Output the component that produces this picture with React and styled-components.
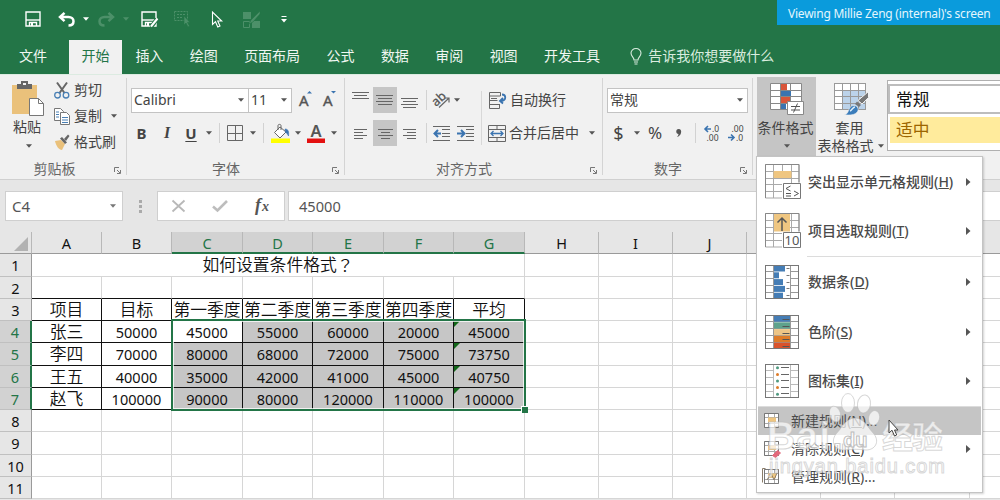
import React from "react";
import styled, { createGlobalStyle, css } from "styled-components";

const GlobalStyle = createGlobalStyle`
  * { box-sizing: border-box; }
  body {
    margin: 0;
    overflow: hidden;
    font-family: "Noto Sans", "Noto Sans CJK SC", sans-serif;
    font-size: 14px;
    color: #444;
  }
  svg { display: block; flex: none; overflow: visible; }
`;

const Window = styled.div`
  position: relative;
  width: 1000px;
  height: 500px;
  overflow: hidden;
  display: flex;
  flex-direction: column;
  background: #e6e6e6;
  line-height: 20px;
  white-space: nowrap;
`;

/* title bar + tabs */
const QuickAccess = styled.div`
  height: 40px;
  padding: 0 0 2px 14px;
  display: flex;
  align-items: center;
  background: #237547;
`;
const Slot = styled.div`
  width: ${(p) => p.$w}px;
  flex: none;
  display: flex;
  justify-content: center;
  align-items: center;
`;
const Banner = styled.div`
  position: absolute;
  top: 0;
  right: 0;
  width: 223px;
  height: 25px;
  padding-left: 11px;
  background: #0a9bdc;
  color: #e4f6fd;
  font-size: 12px;
  line-height: 27px;
  letter-spacing: -0.23px;
`;
const Tabs = styled.div`
  height: 34px;
  display: flex;
  background: #237547;
  color: #f0f7f2;
  line-height: 32px;
`;
const Tab = styled.div`
  padding: 0 13.2px;
  ${(p) => p.$first && css`width: 69px; padding: 0 0 0 19px;`}
  ${(p) => p.$active && css`padding: 0 12.6px; background: #f1f1f1; color: #237547;`}
`;
const TellMe = styled.div`
  display: flex;
  align-items: center;
  gap: 6px;
  margin-left: 17px;
  padding-bottom: 2px;
  color: #d9ecdf;
`;

/* ribbon */
const Ribbon = styled.div`
  height: 106px;
  flex: none;
  display: flex;
  background: #f1f1f1;
  border-top: 1px solid #dcebe1;
  border-bottom: 1px solid #d0d0d0;
`;
const Group = styled.div`
  width: ${(p) => p.$w}px;
  flex: none;
  display: flex;
  flex-direction: column;
  position: relative;
  background: linear-gradient(#d4d4d4, #d4d4d4) right 3px / 1px 97px no-repeat;
`;
const GroupBody = styled.div`
  height: 84px;
  display: flex;
  flex-direction: ${(p) => (p.$column ? "column" : "row")};
`;
const GroupLabel = styled.div`
  height: 20px;
  display: flex;
  align-items: center;
  justify-content: center;
  color: #666;
  padding-right: ${(p) => p.$shift || 20}px;
`;
const Launcher = styled.div`
  position: absolute;
  right: 6px;
  bottom: 5px;
`;
const PasteButton = styled.div`
  width: 54px;
  padding-top: 6px;
  display: flex;
  flex-direction: column;
  align-items: center;
  svg:first-child { margin-left: 3px; }
  svg:last-child { margin: 7px 0 0 3px; }
`;
const ClipList = styled.div`
  padding-top: 2px;
`;
const ClipItem = styled.div`
  height: 26px;
  display: flex;
  align-items: center;
  gap: 4px;
  svg:last-child:not(:first-child) { margin-left: 5px; }
`;
const TopRow = styled.div`
  height: 26px;
  margin-top: 12px;
  display: flex;
  align-items: center;
  padding-left: ${(p) => p.$pad || 0}px;
`;
const BottomRow = styled(TopRow)`
  margin-top: 7px;
`;
const Combo = styled.div`
  width: ${(p) => p.$w}px;
  height: 25px;
  display: flex;
  align-items: center;
  justify-content: space-between;
  padding: 0 4px 0 2px;
  margin-right: -1px;
  background: #fff;
  border: 1px solid #c3c3c3;
`;
const ToolButton = styled(Slot)`
  height: 26px;
  ${(p) => p.$on && css`background: #c6c6c6;`}
`;
const Letter = styled.span`
  font-size: ${(p) => p.$size || 15}px;
  font-weight: ${(p) => (p.$plain ? 400 : 700)};
  font-style: ${(p) => (p.$italic ? "italic" : "normal")};
  font-family: ${(p) => (p.$italic ? '"Liberation Serif", serif' : "inherit")};
  text-decoration: ${(p) => (p.$under ? "underline" : "none")};
  text-underline-offset: 2px;
`;
const Divider = styled(Slot)`
  height: 20px;
  &::before { content: ""; width: 1px; height: 100%; background: #d2d2d2; }
`;
const Cluster = styled.div`
  width: ${(p) => p.$w}px;
  ${(p) => p.$line && css`background: linear-gradient(#d8d8d8, #d8d8d8) right 16px / 1px 54px no-repeat;`}
`;
const LabelText = styled.span`
  margin: 0 10px 0 3px;
`;
const BigButton = styled.div`
  width: ${(p) => p.$w}px;
  height: ${(p) => (p.$on ? 80 : 79)}px;
  margin-top: 2px;
  padding-top: 6px;
  display: flex;
  flex-direction: column;
  align-items: center;
  line-height: 18px;
  ${(p) => p.$on && css`background: #c5c5c5;`}
`;
const BigCaption = styled.div`
  margin: 3px 2px 0 0;
`;
const CaretLine = styled.div`
  display: flex;
  align-items: center;
  gap: 4px;
  height: 18px;
`;
const Gallery = styled.div`
  flex: 1;
  height: 71px;
  margin: 5px 0 0 2px;
  padding-top: 2px;
  background: #fff;
  border: 1px solid #b0b0b0;
  border-right: 0;
`;
const StyleCell = styled.div`
  height: 30px;
  border: 2px solid #bdbdbd;
  border-right: 0;
  padding-left: 6px;
  font-size: 16.8px;
  line-height: 27px;
  color: #111;
  margin-top: 1px;
  ${(p) => p.$neutral && css`
    height: 26px;
    border: 0;
    margin: 3px 0 0 2px;
    line-height: 25px;
    background: #ffeb9c;
    color: #9c6500;
  `}
`;

/* formula bar */
const FormulaBar = styled.div`
  height: 52px;
  flex: none;
  display: flex;
  padding: 11px 0 11px 5px;
`;
const Field = styled.div`
  width: ${(p) => p.$w}px;
  display: flex;
  align-items: center;
  padding: 0 6px;
  background: #fff;
  border: 1px solid #cfcfcf;
  font-size: 15px;
  line-height: 18px;
  padding-bottom: 1px;
  color: #555;
  ${(p) => p.$spread && css`justify-content: space-between;`}
  ${(p) => p.$value && css`
    flex: 1;
    margin-left: 3px;
    padding-left: 10px;
    border-right: 0;
    font-size: 14.6px;
  `}
`;
const FormulaButtons = styled(Field)`
  padding: 0 14px;
  justify-content: space-between;
`;

/* sheet */
const Sheet = styled.div`
  display: grid;
  grid-template-columns: 32px 70px 70px 71px 70px 71px 70px 71px 74px 74px 74px 74px 74px 75px 75px;
  grid-template-rows: 22px 23px 22px 22px 22px 23px 22px 22px 22px 23px 22px 22px;
  font-size: 14.5px;
  line-height: 20px;
  color: #111;
`;
const HeadCell = styled.div`
  display: flex;
  align-items: center;
  justify-content: center;
  background: ${(p) => (p.$on ? "#d2d2d2" : "#e6e6e6")};
  color: ${(p) => (p.$on ? "#237547" : "#111")};
  border-right: 1px solid #b8b8b8;
  border-bottom: ${(p) => (p.$on ? "2px solid #237547" : "1px solid #9a9a9a")};
  padding-top: ${(p) => (p.$on ? 1 : 0)}px;
`;
const RowHead = styled(HeadCell)`
  border-right: ${(p) => (p.$on ? "2px solid #237547" : "1px solid #9a9a9a")};
  border-bottom: 1px solid #c0c0c0;
  padding-top: 0;
`;
const Corner = styled(HeadCell)`
  align-items: flex-end;
  justify-content: flex-end;
  padding: 0 3px 2px 0;
`;
const Cell = styled.div`
  grid-column: ${(p) => p.$c} / span ${(p) => p.$span || 1};
  grid-row: ${(p) => p.$r};
  display: flex;
  align-items: center;
  justify-content: center;
  min-width: 0;
  font-size: ${(p) => (p.$cjk ? 16.8 : 14.5)}px;
  font-weight: ${(p) => (p.$cjk ? 350 : 400)};
  background: ${(p) => (p.$picked ? "#c6c6c6" : "#fff")};
  border-right: 1px solid ${(p) => (p.$boxed ? "#111" : "#d6d6d6")};
  border-bottom: 1px solid ${(p) => (p.$boxed || p.$ruled ? "#111" : "#d6d6d6")};
  ${(p) => p.$flag && css`
    background: linear-gradient(135deg, #13681a 4px, transparent 4.5px), #c6c6c6;
  `}
`;
const WideMark = styled.span`
  font-family: "Noto Sans CJK TC", sans-serif;
`;
const Selection = styled.div`
  grid-column: 4 / 9;
  grid-row: 5 / 9;
  margin: -2px -1px -1px -1px;
  border: 2px solid #237547;
  box-shadow: inset 0 0 0 1px rgba(255, 255, 255, 0.75);
  z-index: 1;
  display: flex;
  align-items: flex-end;
  justify-content: flex-end;
  &::after {
    content: "";
    width: 6px;
    height: 6px;
    margin: 0 -4px -4px 0;
    background: #237547;
    border: solid #fff;
    border-width: 1px 0 0 1px;
  }
`;

/* drop-down menu */
const Menu = styled.div`
  position: absolute;
  left: 756px;
  top: 156px;
  width: 227px;
  height: 337px;
  background: #fff;
  border: 1px solid #c4c4c4;
  padding: 0 1px;
  box-shadow: 1px 1px 2px rgba(0, 0, 0, 0.18);
  z-index: 2;
`;
const MenuItem = styled.div`
  height: 49.6px;
  display: flex;
  align-items: center;
  padding: 0 10px 0 7px;
  gap: 9px;
  font-weight: 500;
  color: #4a4a4a;
  > span { flex: 1; }
`;
const SmallItem = styled(MenuItem)`
  height: 28px;
  padding-left: 4px;
  gap: 11px;
  font-weight: 400;
  background: ${(p) => (p.$on ? "#c5c5c5" : "transparent")};
`;
const MenuRule = styled.div`
  height: 1px;
  margin: 0 0 0 ${(p) => p.$inset || 0}px;
  background: #dcdcdc;
`;

const Watermark = styled.div`
  position: absolute;
  left: 766px;
  top: 390px;
  z-index: 3;
`;
const Pointer = styled.div`
  position: absolute;
  left: 888px;
  top: 419px;
  z-index: 4;
`;

const Caret = ({ color = "#555" }) => (
  <svg width="6" height="4" viewBox="0 0 6 4"><path d="M0 .3h6L3 3.7z" fill={color} /></svg>
);
const Lines = ({ rows, w = 18, h = 16 }) => (
  <svg width={w} height={h} stroke="#666" strokeWidth="1">
    {rows.map(([x1, x2, y], i) => <path key={i} d={`M${x1} ${y + 0.5}H${x2}`} />)}
  </svg>
);
const LaunchIcon = () => (
  <svg width="7" height="7" fill="none" stroke="#777">
    <path d="M.5 5V.5H5M3 3l3 3M6.5 3v3.5H3" />
  </svg>
);

const SaveIcon = ({ edit }) => (
  <svg width="16" height="16" fill="none" stroke="#fff" strokeWidth="1.4">
    <path d="M1 1h14v14H1z" />
    <path d="M1 9h14" />
    <path d="M4.5 15v-3.5h7V15" />
    <path d="M6 12h2v3H6z" fill="#fff" stroke="none" />
    {edit && <path d="M16 8l-6 8" stroke="#237547" strokeWidth="4" />}
    {edit && <path d="M16.5 7.5L10 15.5" strokeWidth="2" />}
  </svg>
);
const UndoIcon = ({ dim }) => (
  <svg width="17" height="15" viewBox="0 0 17 15" fill="none" stroke={dim ? "#4c9069" : "#fff"} strokeWidth="2.5">
    <g transform={dim ? "translate(17 0) scale(-1 1)" : undefined}>
      <path d="M6.5 .8L2 5l4.500 4.200M2 5h8.500c3 0 5 1.800 5 4.200 0 2.800-2 4.300-5 4.300" />
    </g>
  </svg>
);

const Grid = ({ size = 34, cols, rows, children, color = "#999" }) => (
  <svg width={size} height={size}>
    <rect x=".5" y=".5" width={size - 1} height={size - 1} fill="#fff" />
    <g stroke={color}>
      {cols.map((x) => <path key={"c" + x} d={`M${x + 0.5} 0V${size}`} />)}
      {rows.map((y) => <path key={"r" + y} d={`M0 ${y + 0.5}H${size}`} />)}
    </g>
    {children}
    <rect x=".5" y=".5" width={size - 1} height={size - 1} fill="none" stroke="#777" />
  </svg>
);

const FIVE_ROWS = [6, 13, 20, 27];
const bars = [11, 5, 9, 11, 9];
const scale = ["#457db5", "#5ea28c", "#edc586", "#de7c28", "#d9532c"];

const HighlightIcon = () => (
  <svg width="34" height="36" fill="none" stroke="#aaa">
    <path d="M.5 34V.5H34V19M.5 34H17M0 7.500H34M0 14.500H34M0 20.500H17M0 27.500H17M8.500 0V34M17.500 0V7M26.500 0V19" />
    <path d="M9 7.500h17v6H9z" fill="#efc681" stroke="#efc681" />
    <path d="M.5 34V.5H34V18" stroke="#888" />
    <path d="M18.500 19.500h17v15h-17z" fill="#fff" stroke="#777" />
    <path d="M25.500 22l-4.500 2.500 4.500 2.500M21 29.500h5M21 32h5M29 27l4.500 2.500L29 32" stroke="#555" />
  </svg>
);
const TopIcon = () => (
  <svg width="34" height="36" fill="none" stroke="#aaa">
    <path d="M.5 34V.5H34V19M.5 34H17M0 7.500H34M0 14.500H34M0 20.500H17M0 27.500H17M8.500 0V34M26.500 0V19" />
    <path d="M9 .5h16v18H9z" fill="#efc681" stroke="none" />
    <path d="M.5 34V.5H34V18" stroke="#888" />
    <path d="M17 18V5M12.500 9.500L17 5l4.500 4.500" stroke="#555" strokeWidth="1.500" />
    <path d="M18.500 19.500h17v15h-17z" fill="#fff" stroke="#777" />
    <text x="19.500" y="32" fontSize="13" fontWeight="400" fill="#555" stroke="none">10</text>
  </svg>
);
const BarsIcon = () => (
  <Grid cols={[8, 25]} rows={FIVE_ROWS}>
    <path d="M9 1h16v32H9z" fill="#fff" />
    {bars.map((w, i) => <path key={i} d={`M9 ${i * 6.8 + 0.5}h${w}v6H9z`} fill="#457db5" />)}
    {bars.map((w, i) => <path key={"d" + i} d={`M21.500 ${Math.round(i * 6.8) + 3.5}h3`} stroke="#777" />)}
  </Grid>
);
const ScaleIcon = () => (
  <Grid cols={[8, 25]} rows={FIVE_ROWS}>
    {scale.map((c, i) => <path key={c} d={`M9 ${i * 6.8 + 0.5}h16v6.200H9z`} fill={c} />)}
    {scale.map((c, i) => <path key={"d" + c} d={`M17.500 ${Math.round(i * 6.8) + 4.5}h7`} stroke="#555" />)}
  </Grid>
);
const SetsIcon = () => (
  <Grid cols={[8, 25]} rows={FIVE_ROWS} color="#bbb">
    <path d="M9 1h16v32H9z" fill="#fff" />
    {[0, 1, 2, 3, 4].map((i) => (
      <g key={i}>
        <circle cx="12.500" cy={i * 6.6 + 3.8} r="1.500" fill={i % 2 ? "#de7c28" : "#4f9a80"} />
        <path d={`M16 ${Math.round(i * 6.6) + 3.5}h8`} stroke="#666" />
      </g>
    ))}
  </Grid>
);
const SmallIcon = ({ kind }) => (
  <svg width="18" height="18" fill="none" stroke="#aaa">
    <path d="M2.500 1.500h14v14h-14zM2 5.500h14M2 11.500h14M6.500 1v14M12.500 1v14" fill="#fff" />
    <path d="M2.500 1.500h14v14h-14z" stroke="#777" />
    <path d="M6 5.500h8v4.500H6z" fill="#efc681" stroke="none" />
    {kind === "clear" && <path d="M10.500 15.500l5-5 3 2.500-5 4.500z" fill="#e2697b" stroke="#e2697b" />}
    {kind === "manage" && <path d="M.5 .5v14M.5 .5h3M5 12l4-7 3 7 3-7" stroke="#8b7d6a" />}
  </svg>
);
const FormatIcon = () => (
  <svg width="34" height="33" fill="none" stroke="#888">
    <path d="M.5 .5h31v26H.5z" fill="#fff" />
    <path d="M0 7.500h31M0 13.500h31M0 20.500h31M10.500 0v26M20.500 0v26" />
    <path d="M11 1h6v6h-6zM11 14h9v6h-9z" fill="#d9553a" stroke="none" />
    <path d="M11 8h10v5H11zM11 21h5v5h-5z" fill="#3b74b0" stroke="none" />
    <path d="M17.500 18.500h16v13h-16z" fill="#fff" />
    <path d="M21 23.500h9M21 27h9M27.500 20.500l-4 9" stroke="#555" />
  </svg>
);
const TableIcon = () => (
  <svg width="34" height="33" fill="none" stroke="#888">
    <path d="M.5 .5h31v26H.5z" fill="#fff" />
    <path d="M8 7h23v19H8z" fill="#bcd3ea" stroke="none" />
    <path d="M0 7.500h31M0 13.500h31M0 20.500h31M8.500 0v26M16.500 0v26M24.500 0v26M.5 .5h31v26H.5z" stroke="#999" />
    <path d="M34.500 8.500v6L28 21l-4-3.500z" fill="#777" stroke="#f1f1f1" />
    <path d="M23 18.500l4 3.500-2 2-4-3z" fill="#777" stroke="none" />
    <path d="M10.500 32c5-1 3-8 8.500-9.500 3.500-.5 6.500 3 4.500 6-2.500 4-8 3.500-13 3.500z" fill="#3b7dbb" stroke="#f1f1f1" strokeWidth=".6" />
    <path d="M16 28c2-1 3-4 5-4" stroke="#dcecf8" strokeWidth="1.500" />
  </svg>
);
const PasteIcon = () => (
  <svg width="33" height="36">
    <path d="M0 4h25v29H0z" fill="#eac17b" />
    <path d="M5 3h4V0h7v3h4v5H5z" fill="#666" />
    <path d="M11 2h3v2h-3z" fill="#f1f1f1" />
    <path d="M17.500 17.500h9l5 5v12h-14z" fill="#fff" stroke="#777" />
    <path d="M26.500 17.500v5h5" fill="none" stroke="#777" />
  </svg>
);
const CutIcon = () => (
  <svg width="16" height="17" fill="none">
    <path d="M3 .5l7.500 10.500M13 .5L5.500 11" stroke="#666" strokeWidth="2" />
    <circle cx="3.500" cy="13.200" r="2.800" stroke="#4a80b5" strokeWidth="1.300" />
    <circle cx="12" cy="13.200" r="2.800" stroke="#4a80b5" strokeWidth="1.300" />
  </svg>
);
const CopyIcon = () => (
  <svg width="16" height="17" fill="#fff" stroke="#777">
    <path d="M.5 .5h6l3 3v9h-9z" />
    <path d="M2 4h3M2 6.500h3M2 9h3" stroke="#4a80b5" />
    <path d="M6.500 4.500h6l3 3v9h-9z" />
    <path d="M8 9.500h6M8 12h6M8 14.500h6" stroke="#4a80b5" />
  </svg>
);
const PainterIcon = () => (
  <svg width="16" height="16">
    <path d="M1 7l6-1 4 4-3 6c-3 0-6-4-7-9z" fill="#eac17b" />
    <path d="M6 4.500l2-1.500 5 5.500-2 1.500z" fill="#666" />
    <path d="M10 5l4-4.500L15.500 2 12 7z" fill="#666" />
  </svg>
);
const BorderIcon = () => (
  <svg width="16" height="16" fill="none" stroke="#666"><path d="M.5 .5h15v15H.5zM8.500 0v16M0 8.500h16" /></svg>
);
const FillIcon = () => (
  <svg width="19" height="19" fill="none" stroke="#666">
    <path d="M9 3l6 5-6 6-5.500-5.500z" fill="#fff" />
    <path d="M7 6V1.500c0-1.500 3-1.500 3 0V6" />
    <path d="M14 5c3.500 0 4 3 3.500 7-1-2-1.500-3-3-3.500z" fill="#3b74b0" stroke="#3b74b0" strokeWidth=".6" />
    <path d="M0 14.500h19v4.500H0z" fill="#ff0" stroke="none" />
  </svg>
);
const FontColorIcon = () => (
  <svg width="18" height="19">
    <text x="3.500" y="12.500" fontSize="16.500" fontWeight="600" fill="#555">A</text>
    <path d="M0 14.500h18V19H0z" fill="#e31010" />
  </svg>
);
const SizeIcon = ({ up }) => (
  <svg width="14" height="18">
    <text x="0" y="14.500" fontSize="15" fill="#555" stroke="#555" strokeWidth=".4">A</text>
    <path d={up ? "M8 2.500h5L10.500 0z" : "M8 0h5l-2.500 2.500z"} fill="#3b74b0" />
  </svg>
);
const AngleIcon = () => (
  <svg width="18" height="16">
    <text x="1" y="13" fontSize="12.500" fill="#555" stroke="#555" strokeWidth=".3" transform="rotate(-42 5 10)">ab</text>
    <path d="M7 15.500l9.500-9M12.500 6h4.500v4.500" fill="none" stroke="#666" strokeWidth="1.200" />
  </svg>
);
const IndentIcon = ({ right }) => (
  <svg width="17" height="15" fill="none" stroke="#666">
    <path d="M0 .5h17M9 3.500h8M9 7.500h8M9 10.500h8M0 14.500h17" />
    <path d={right ? "M0 7.500h7M4 4l3.500 3.500L4 11" : "M1 7.500h7M5 4L1.500 7.500 5 11"} stroke="#3b74b0" strokeWidth="2" />
  </svg>
);
const WrapIcon = () => (
  <svg width="18" height="17" fill="none" stroke="#666">
    <path d="M.5 .5h11v3.500H.5zM.5 4v12.500h10V12M.5 8.500h8M.5 12.500h10M2 6.500h6" />
    <path d="M13 2.500c4 0 5 6-1 6.500M14 6l-3 3 3 2.500" stroke="#3b74b0" strokeWidth="1.800" />
  </svg>
);
const MergeIcon = () => (
  <svg width="18" height="17" fill="none" stroke="#666">
    <path d="M.5 .5h17v16H.5zM0 4.500h18M0 12.500h18M9 0v4.500M9 12.500V17" />
    <path d="M3 8.500h12M5.500 6L3 8.500 5.500 11M12.500 6L15 8.500 12.500 11" stroke="#3b74b0" strokeWidth="1.300" />
  </svg>
);
const DecimalIcon = ({ less }) => (
  <svg width="15" height="16" fontSize="8.500" fill="#444">
    <text x={less ? 3.5 : 8} y="7">{less ? ".00" : ".0"}</text>
    <text x={less ? 8 : 2.5} y="15.500">{less ? ".0" : ".00"}</text>
    <g transform={less ? "translate(7 8.500) scale(-1 1)" : undefined}>
      <path d="M7 4H1.500M4 1L1 4l3 3" fill="none" stroke="#3b74b0" strokeWidth="1.600" />
    </g>
  </svg>
);

const Accel = ({ text, letter, tail }) => (
  <span>{text}(<u>{letter}</u>){tail}</span>
);
const Arrow = () => (
  <svg width="5" height="8"><path d="M0 0l4.500 4L0 8z" fill="#555" /></svg>
);

const tabs = ["文件", "开始", "插入", "绘图", "页面布局", "公式", "数据", "审阅", "视图", "开发工具"];
const columns = "ABCDEFGHIJKLMN".split("");
const table = [
  ["项目", "目标", "第一季度", "第二季度", "第三季度", "第四季度", "平均"],
  ["张三", 50000, 45000, 55000, 60000, 20000, 45000],
  ["李四", 70000, 80000, 68000, 72000, 75000, 73750],
  ["王五", 40000, 35000, 42000, 41000, 45000, 40750],
  ["赵飞", 100000, 90000, 80000, 120000, 110000, 100000],
];
const bigItems = [
  ["突出显示单元格规则", "H", HighlightIcon],
  ["项目选取规则", "T", TopIcon],
  ["数据条", "D", BarsIcon],
  ["色阶", "S", ScaleIcon],
  ["图标集", "I", SetsIcon],
];

const SheetGrid = () => {
  const cells = [];
  cells.push(
    <Cell key="title" $c={2} $span={7} $r={2} $cjk>如何设置条件格式<WideMark>？</WideMark></Cell>
  );
  for (let r = 1; r <= 11; r++) {
    cells.push(
      <RowHead key={"h" + r} $on={r >= 4 && r <= 7} style={{ gridColumn: 1, gridRow: r + 1 }}>{r}</RowHead>
    );
    columns.forEach((name, c) => {
      if (r === 1 && c < 7) return;
      const inTable = r >= 3 && r <= 7 && c < 7;
      const value = inTable ? table[r - 3][c] : null;
      const picked = inTable && r > 3 && c > 1 && !(r === 4 && c === 2);
      cells.push(
        <Cell
          key={name + r}
          $c={c + 2}
          $r={r + 1}
          $cjk={typeof value === "string"}
          $boxed={inTable}
          $ruled={r === 2 && c < 7}
          $picked={picked}
          $flag={picked && c === 6}
        >
          {value}
        </Cell>
      );
    });
  }
  return (
    <Sheet>
      <Corner>
        <svg width="14" height="14"><path d="M14 0v14H0z" fill="#b2b2b2" /></svg>
      </Corner>
      {columns.map((name, i) => <HeadCell key={name} $on={i > 1 && i < 7}>{name}</HeadCell>)}
      {cells}
      <Selection />
    </Sheet>
  );
};

const App = () => {
  return (
    <Window>
      <GlobalStyle />
      <QuickAccess>
        <Slot $w={37}><SaveIcon /></Slot>
        <Slot $w={31}><UndoIcon /></Slot>
        <Slot $w={8}><Caret color="#fff" /></Slot>
        <Slot $w={33}><UndoIcon dim /></Slot>
        <Slot $w={6}><Caret color="#4c9069" /></Slot>
        <Slot $w={40}><SaveIcon edit /></Slot>
        <Slot $w={26}>
          <svg width="16" height="16" fill="none" stroke="#4c9069">
            <path d="M.5 .5h13v9H.5z" strokeDasharray="2 1" />
            <path d="M3 3.500h8M3 6.500h5" strokeDasharray="2 1" />
            <path d="M10 5v9l2-2 2 4 1.500-1-2-3.500H16z" fill="#4c9069" stroke="#237547" strokeWidth=".6" />
          </svg>
        </Slot>
        <Slot $w={44}>
          <svg width="12" height="17" fill="none" stroke="#fff" strokeWidth="1.100">
            <path d="M1.500 1v12.500l3-2.800 2.300 5.300 2.200-1-2.300-5h4z" />
          </svg>
        </Slot>
        <Slot $w={24}>
          <svg width="17" height="17" fill="#4c9069">
            <path d="M0 1h8v7H0zM9 10h8v7H9z" />
            <path d="M.5 10.500h6v6h-6z" fill="none" stroke="#4c9069" />
            <path d="M17 0l-9 9-2 4 4-2 7-8z" stroke="#237547" strokeWidth=".6" />
          </svg>
        </Slot>
        <Slot $w={42}>
          <svg width="6" height="7"><path d="M.5 .5h5" stroke="#fff" /><path d="M0 3h6L3 6.500z" fill="#fff" /></svg>
        </Slot>
      </QuickAccess>
      <Banner>Viewing Millie Zeng (internal)'s screen</Banner>

      <Tabs>
        {tabs.map((name, i) => <Tab key={name} $first={i === 0} $active={i === 1}>{name}</Tab>)}
        <TellMe>
          <svg width="12" height="17" fill="none" stroke="#d9ecdf" strokeWidth="1.100">
            <path d="M4 12c0-3-3-3.500-3-7a5 4.500 0 0 1 10 0c0 3.500-3 4-3 7zM4 14h4M4.500 16h3" />
          </svg>
          告诉我你想要做什么
        </TellMe>
      </Tabs>

      <Ribbon>
        <Group $w={127}>
          <GroupBody>
            <PasteButton>
              <PasteIcon />
              粘贴
              <Caret />
            </PasteButton>
            <ClipList>
              <ClipItem><CutIcon />剪切</ClipItem>
              <ClipItem><CopyIcon />复制<Caret /></ClipItem>
              <ClipItem><PainterIcon />格式刷</ClipItem>
            </ClipList>
          </GroupBody>
          <GroupLabel $shift={18}>剪贴板</GroupLabel>
          <Launcher><LaunchIcon /></Launcher>
        </Group>

        <Group $w={218}>
          <GroupBody $column>
            <TopRow $pad={4}>
              <Combo $w={118}>Calibri<Caret /></Combo>
              <Combo $w={44}>11<Caret /></Combo>
              <ToolButton $w={30}><SizeIcon up /></ToolButton>
              <ToolButton $w={17}><SizeIcon /></ToolButton>
            </TopRow>
            <BottomRow $pad={3}>
              <ToolButton $w={23}><Letter>B</Letter></ToolButton>
              <ToolButton $w={28}><Letter $italic $size={16}>I</Letter></ToolButton>
              <ToolButton $w={20}><Letter $under>U</Letter></ToolButton>
              <ToolButton $w={16}><Caret /></ToolButton>
              <Divider $w={5} />
              <ToolButton $w={26}><BorderIcon /></ToolButton>
              <ToolButton $w={10}><Caret /></ToolButton>
              <Divider $w={10} />
              <ToolButton $w={24}><FillIcon /></ToolButton>
              <ToolButton $w={11}><Caret /></ToolButton>
              <ToolButton $w={26}><FontColorIcon /></ToolButton>
              <ToolButton $w={9}><Caret /></ToolButton>
            </BottomRow>
          </GroupBody>
          <GroupLabel>字体</GroupLabel>
          <Launcher><LaunchIcon /></Launcher>
        </Group>

        <Group $w={258}>
          <GroupBody>
            <Cluster $w={80}>
              <TopRow $pad={3}>
                <ToolButton $w={25}><Lines rows={[[0, 17, 0], [2, 15, 3], [0, 17, 6]]} /></ToolButton>
                <ToolButton $w={24} $on><Lines rows={[[0, 17, 3], [2, 16, 6], [0, 17, 9], [2, 16, 12]]} /></ToolButton>
                <ToolButton $w={25}><Lines rows={[[0, 17, 6], [2, 15, 9], [0, 17, 12], [2, 15, 15]]} /></ToolButton>
              </TopRow>
              <BottomRow $pad={3}>
                <ToolButton $w={25}><Lines w={13} h={13} rows={[[0, 13, 2], [0, 9, 5], [0, 13, 8], [0, 9, 11]]} /></ToolButton>
                <ToolButton $w={24} $on><Lines w={15} h={13} rows={[[0, 15, 2], [3, 12, 5], [0, 15, 8], [3, 12, 11]]} /></ToolButton>
                <ToolButton $w={25}><Lines w={13} h={13} rows={[[0, 13, 2], [4, 13, 5], [0, 13, 8], [4, 13, 11]]} /></ToolButton>
              </BottomRow>
            </Cluster>
            <Cluster $w={57} $line>
              <TopRow>
                <Divider $w={2} />
                <ToolButton $w={28}><AngleIcon /></ToolButton>
                <ToolButton $w={4}><Caret /></ToolButton>
              </TopRow>
              <BottomRow>
                <Divider $w={2} />
                <ToolButton $w={28}><IndentIcon /></ToolButton>
                <ToolButton $w={20}><IndentIcon right /></ToolButton>
              </BottomRow>
            </Cluster>
            <Cluster $w={120}>
              <TopRow $pad={7}><WrapIcon /><LabelText>自动换行</LabelText></TopRow>
              <BottomRow $pad={6}><MergeIcon /><LabelText>合并后居中</LabelText><Caret /></BottomRow>
            </Cluster>
          </GroupBody>
          <GroupLabel>对齐方式</GroupLabel>
          <Launcher><LaunchIcon /></Launcher>
        </Group>

        <Group $w={150}>
          <GroupBody $column>
            <TopRow $pad={4}><Combo $w={141}>常规<Caret /></Combo></TopRow>
            <BottomRow $pad={1}>
              <ToolButton $w={29}><Letter $plain $size={18}>$</Letter></ToolButton>
              <ToolButton $w={7}><Caret /></ToolButton>
              <ToolButton $w={30}><Letter $plain $size={17}>%</Letter></ToolButton>
              <ToolButton $w={17}>
                <svg width="6" height="8"><path d="M2.500 0C5 0 5.500 2 5 4 4.500 6 3 7.500 1 8c1-1 1.500-2 1.500-3C-.5 5-.5 0 2.500 0z" fill="#555" /></svg>
              </ToolButton>
              <Divider $w={17} />
              <ToolButton $w={15}><DecimalIcon /></ToolButton>
              <ToolButton $w={33}><DecimalIcon less /></ToolButton>
            </BottomRow>
          </GroupBody>
          <GroupLabel>数字</GroupLabel>
          <Launcher><LaunchIcon /></Launcher>
        </Group>

        <Slot $w={4} />
        <BigButton $w={59} $on>
          <FormatIcon />
          <BigCaption>条件格式</BigCaption>
          <CaretLine><Caret /></CaretLine>
        </BigButton>
        <BigButton $w={69}>
          <TableIcon />
          <BigCaption>套用</BigCaption>
          <CaretLine>表格格式<Caret /></CaretLine>
        </BigButton>
        <Gallery>
          <StyleCell>常规</StyleCell>
          <StyleCell $neutral>适中</StyleCell>
        </Gallery>
      </Ribbon>

      <FormulaBar>
        <Field $w={118} $spread>C4<Caret color="#777" /></Field>
        <Slot $w={34}>
          <svg width="3" height="13" fill="#aaa"><path d="M0 0h3v3H0zM0 5h3v3H0zM0 10h3v3H0z" /></svg>
        </Slot>
        <FormulaButtons $w={128}>
          <svg width="13" height="12" stroke="#b8b8b8" strokeWidth="1.800"><path d="M.5 .5l12 11M12.500 .5L.5 11.500" /></svg>
          <svg width="16" height="12" fill="none" stroke="#bdbdbd" strokeWidth="2.600"><path d="M1 6.500l4.500 4L15 1" /></svg>
          <svg width="15" height="18">
            <text x="0" y="14" fontFamily="Liberation Serif" fontStyle="italic" fontWeight="700" fontSize="18" fill="#555">f</text>
            <text x="7" y="14" fontFamily="Liberation Serif" fontStyle="italic" fontWeight="700" fontSize="14" fill="#555">x</text>
          </svg>
        </FormulaButtons>
        <Field $value>45000</Field>
      </FormulaBar>

      <SheetGrid />

      <Menu>
        {bigItems.map(([text, letter, Icon], i) => (
          <React.Fragment key={letter}>
            {i === 2 && <MenuRule $inset={49} />}
            <MenuItem><Icon /><Accel text={text} letter={letter} /><Arrow /></MenuItem>
          </React.Fragment>
        ))}
        <MenuRule />
        <SmallItem $on><SmallIcon /><Accel text="新建规则" letter="N" tail="..." /></SmallItem>
        <SmallItem><SmallIcon kind="clear" /><Accel text="清除规则" letter="C" /><Arrow /></SmallItem>
        <SmallItem><SmallIcon kind="manage" /><Accel text="管理规则" letter="R" tail="..." /></SmallItem>
      </Menu>

      <Watermark>
        <svg width="182" height="92" fill="#fff" fillOpacity=".7" stroke="#bdbdbd" strokeOpacity=".6">
          <ellipse cx="82" cy="13" rx="6.500" ry="9.500" />
          <ellipse cx="98" cy="14" rx="6.500" ry="9" transform="rotate(8 98 14)" />
          <ellipse cx="69" cy="24" rx="5.500" ry="8" transform="rotate(-15 69 24)" />
          <ellipse cx="108" cy="28" rx="5.500" ry="7.500" transform="rotate(15 108 28)" />
          <path d="M89 28c9 0 13 10 19 16 6 8 1 16-8 16-8-1-14-1-22 0-9 0-14-8-8-16 6-6 10-16 19-16z" />
          <text x="1" y="59" fontFamily="Liberation Sans" fontWeight="700" fontSize="39" textLength="63">Bai</text>
          <text x="77" y="57" fontFamily="Liberation Sans" fontWeight="700" fontSize="20" strokeOpacity="1">du</text>
          <text x="116" y="58" fontFamily="Noto Sans CJK SC" fontWeight="700" fontSize="31" textLength="61">经验</text>
          <text x="3" y="83" fontFamily="Liberation Sans" fontSize="20" textLength="176">jingyan.baidu.com</text>
        </svg>
      </Watermark>
      <Pointer>
        <svg width="13" height="19" fill="#fff" stroke="#444"><path d="M1 1v13l3-2.800 2.500 5.800 2.200-1L6.500 11H10z" /></svg>
      </Pointer>
    </Window>
  );
};

export default App;
